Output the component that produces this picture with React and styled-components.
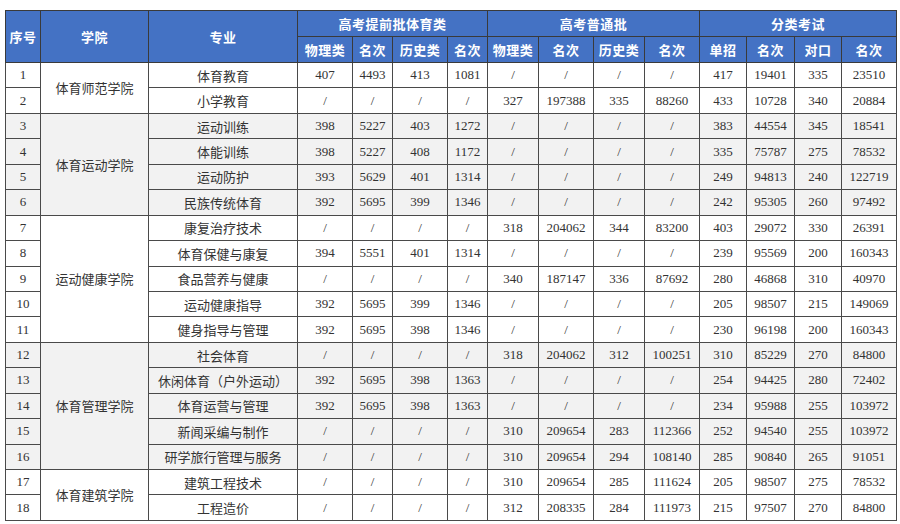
import styled, { createGlobalStyle } from "styled-components";

const GlobalStyle = createGlobalStyle`
  body {
    margin: 0;
    background: #ffffff;
    font-family: "Liberation Serif", "Noto Sans CJK SC", serif;
  }
`;

const Page = styled.div`
  padding: 10px 5px 0 5px;
`;

const Table = styled.table`
  border-collapse: collapse;
  table-layout: fixed;
  width: 891px;
  font-size: 13px;
  color: #333333;
`;

const HeadCell = styled.th`
  background: #4472c4;
  color: #ffffff;
  font-weight: 700;
  font-size: 13px;
  height: 25px;
  padding: 0;
  text-align: center;
  border: 1px solid #3a3a3a;
  letter-spacing: 0.5px;
`;

const Row = styled.tr`
  background: ${(p) => (p.$shade ? "#f2f2f2" : "#ffffff")};
  height: 25.45px;
`;

const Cell = styled.td`
  padding: 0;
  text-align: center;
  border: 1px solid #4a4a4a;
  white-space: nowrap;
  overflow: hidden;
  font-size: 13px;
`;

const widths = [35, 108, 149, 55, 40, 55, 40, 51, 55, 51, 55, 47, 48, 47, 55];

const groups = [
  {
    name: "体育师范学院",
    rows: [
      ["体育教育", "407", "4493", "413", "1081", "/", "/", "/", "/", "417", "19401", "335", "23510"],
      ["小学教育", "/", "/", "/", "/", "327", "197388", "335", "88260", "433", "10728", "340", "20884"],
    ],
  },
  {
    name: "体育运动学院",
    rows: [
      ["运动训练", "398", "5227", "403", "1272", "/", "/", "/", "/", "383", "44554", "345", "18541"],
      ["体能训练", "398", "5227", "408", "1172", "/", "/", "/", "/", "335", "75787", "275", "78532"],
      ["运动防护", "393", "5629", "401", "1314", "/", "/", "/", "/", "249", "94813", "240", "122719"],
      ["民族传统体育", "392", "5695", "399", "1346", "/", "/", "/", "/", "242", "95305", "260", "97492"],
    ],
  },
  {
    name: "运动健康学院",
    rows: [
      ["康复治疗技术", "/", "/", "/", "/", "318", "204062", "344", "83200", "403", "29072", "330", "26391"],
      ["体育保健与康复", "394", "5551", "401", "1314", "/", "/", "/", "/", "239", "95569", "200", "160343"],
      ["食品营养与健康", "/", "/", "/", "/", "340", "187147", "336", "87692", "280", "46868", "310", "40970"],
      ["运动健康指导", "392", "5695", "399", "1346", "/", "/", "/", "/", "205", "98507", "215", "149069"],
      ["健身指导与管理", "392", "5695", "398", "1346", "/", "/", "/", "/", "230", "96198", "200", "160343"],
    ],
  },
  {
    name: "体育管理学院",
    rows: [
      ["社会体育", "/", "/", "/", "/", "318", "204062", "312", "100251", "310", "85229", "270", "84800"],
      ["休闲体育（户外运动）", "392", "5695", "398", "1363", "/", "/", "/", "/", "254", "94425", "280", "72402"],
      ["体育运营与管理", "392", "5695", "398", "1363", "/", "/", "/", "/", "234", "95988", "255", "103972"],
      ["新闻采编与制作", "/", "/", "/", "/", "310", "209654", "283", "112366", "252", "94540", "255", "103972"],
      ["研学旅行管理与服务", "/", "/", "/", "/", "310", "209654", "294", "108140", "285", "90840", "265", "91051"],
    ],
  },
  {
    name: "体育建筑学院",
    rows: [
      ["建筑工程技术", "/", "/", "/", "/", "310", "209654", "285", "111624", "205", "98507", "275", "78532"],
      ["工程造价", "/", "/", "/", "/", "312", "208335", "284", "111973", "215", "97507", "270", "84800"],
    ],
  },
];

const subHeads = ["物理类", "名次", "历史类", "名次", "物理类", "名次", "历史类", "名次", "单招", "名次", "对口", "名次"];

export default function App() {
  let n = 0;
  return (
    <Page>
      <GlobalStyle />
      <Table>
        <colgroup>
          {widths.map((w, i) => (
            <col key={i} style={{ width: w }} />
          ))}
        </colgroup>
        <thead>
          <tr>
            <HeadCell rowSpan={2}>序号</HeadCell>
            <HeadCell rowSpan={2}>学院</HeadCell>
            <HeadCell rowSpan={2}>专业</HeadCell>
            <HeadCell colSpan={4}>高考提前批体育类</HeadCell>
            <HeadCell colSpan={4}>高考普通批</HeadCell>
            <HeadCell colSpan={4}>分类考试</HeadCell>
          </tr>
          <tr>
            {subHeads.map((h, i) => (
              <HeadCell key={i}>{h}</HeadCell>
            ))}
          </tr>
        </thead>
        <tbody>
          {groups.map((g, gi) =>
            g.rows.map((r, ri) => {
              n += 1;
              return (
                <Row key={n} $shade={gi % 2 === 1}>
                  <Cell>{n}</Cell>
                  {ri === 0 && <Cell rowSpan={g.rows.length}>{g.name}</Cell>}
                  <Cell>{r[0]}</Cell>
                  {r.slice(1).map((v, vi) => (
                    <Cell key={vi}>{v}</Cell>
                  ))}
                </Row>
              );
            })
          )}
        </tbody>
      </Table>
    </Page>
  );
}
